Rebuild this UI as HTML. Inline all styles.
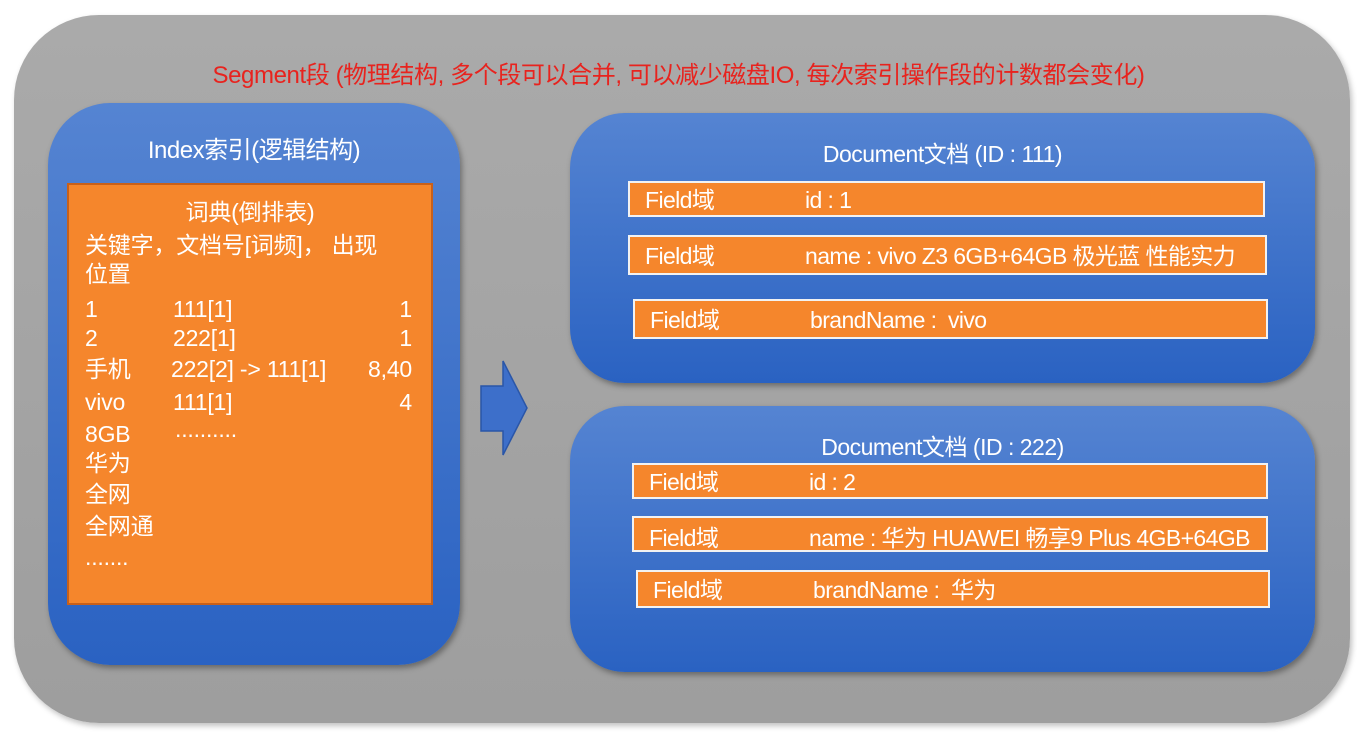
<!DOCTYPE html>
<html><head><meta charset="utf-8"><style>
*{margin:0;padding:0;box-sizing:border-box}
body{width:1357px;height:735px;background:#fff;position:relative;overflow:hidden;font-family:"Liberation Sans","Noto Sans CJK SC",sans-serif;color:#fff}
.abs{position:absolute}
.outer{left:14px;top:15px;width:1336px;height:708px;border-radius:85px;background:linear-gradient(#aaaaaa,#9e9e9e);box-shadow:2px 3px 6px rgba(0,0,0,.25)}
.blue{border-radius:55px;background:linear-gradient(#5584d2,#2a62c2);box-shadow:2px 3px 6px rgba(0,0,0,.35)}
.title{font-size:23px;line-height:26px;letter-spacing:-0.5px;white-space:nowrap}
.field{background:#f5862c;border:2px solid #f2f2f2;font-size:23px;letter-spacing:-0.6px;white-space:nowrap}
.field span{position:absolute;top:50%;margin-top:-12px;line-height:26px}
.ob{left:67px;top:183px;width:366px;height:422px;background:#f5862c;border:2px solid #c8601a}
.ob div{position:absolute;font-size:23px;line-height:24px;white-space:nowrap;letter-spacing:-0.2px}
</style></head><body>
<div class="abs outer"></div>
<div class="abs" style="left:0;width:1357px;top:63px;line-height:26px;text-align:center;color:#e8231e;font-size:24px;letter-spacing:-0.4px">Segment段 (物理结构, 多个段可以合并, 可以减少磁盘IO, 每次索引操作段的计数都会变化)</div>

<div class="abs blue" style="left:48px;top:103px;width:412px;height:562px;border-radius:62px"></div>
<div class="abs title" style="left:48px;width:412px;top:138px;text-align:center;font-size:24px">Index索引(逻辑结构)</div>
<div class="abs ob">
<div style="left:0;width:362px;text-align:center;top:15px">词典(倒排表)</div>
<div style="left:16px;top:48px">关键字，文档号[词频]， 出现</div>
<div style="left:16px;top:77px">位置</div>
<div style="left:16px;top:112px">1</div><div style="left:104px;top:112px">111[1]</div><div style="right:19px;top:112px">1</div>
<div style="left:16px;top:141px">2</div><div style="left:104px;top:141px">222[1]</div><div style="right:19px;top:141px">1</div>
<div style="left:16px;top:172px">手机</div><div style="left:102px;top:172px">222[2] -&gt; 111[1]</div><div style="right:19px;top:172px">8,40</div>
<div style="left:16px;top:205px">vivo</div><div style="left:104px;top:205px">111[1]</div><div style="right:19px;top:205px">4</div>
<div style="left:16px;top:237px">8GB</div><div style="left:106px;top:232px">..........</div>
<div style="left:16px;top:266px">华为</div>
<div style="left:16px;top:297px">全网</div>
<div style="left:16px;top:329px">全网通</div>
<div style="left:16px;top:360px">.......</div>
</div>

<svg class="abs" style="left:478px;top:358px" width="52" height="102"><path d="M3 28 H25 V3 L49 50 L25 97 V73 H3 Z" fill="#3d6fca" stroke="#2a56a8" stroke-width="1.5"/></svg>

<div class="abs blue" style="left:570px;top:113px;width:745px;height:270px"></div>
<div class="abs title" style="left:570px;width:745px;top:141px;text-align:center">Document文档 (ID : 111)</div>
<div class="abs field" style="left:628px;top:181px;width:637px;height:36px"><span style="left:15px">Field域</span><span style="left:175px">id : 1</span></div>
<div class="abs field" style="left:628px;top:235px;width:639px;height:40px"><span style="left:15px">Field域</span><span style="left:175px">name : vivo Z3 6GB+64GB 极光蓝 性能实力</span></div>
<div class="abs field" style="left:633px;top:299px;width:635px;height:40px"><span style="left:15px">Field域</span><span style="left:175px">brandName :&nbsp; vivo</span></div>

<div class="abs blue" style="left:570px;top:406px;width:745px;height:266px"></div>
<div class="abs title" style="left:570px;width:745px;top:434px;text-align:center">Document文档 (ID : 222)</div>
<div class="abs field" style="left:632px;top:463px;width:636px;height:36px"><span style="left:15px">Field域</span><span style="left:175px">id : 2</span></div>
<div class="abs field" style="left:632px;top:516px;width:636px;height:36px;overflow:hidden"><span style="left:15px;margin-top:-9px">Field域</span><span style="left:175px;margin-top:-9px">name : 华为 HUAWEI 畅享9 Plus 4GB+64GB</span></div>
<div class="abs field" style="left:636px;top:570px;width:634px;height:38px"><span style="left:15px">Field域</span><span style="left:175px">brandName :&nbsp; 华为</span></div>
</body></html>
